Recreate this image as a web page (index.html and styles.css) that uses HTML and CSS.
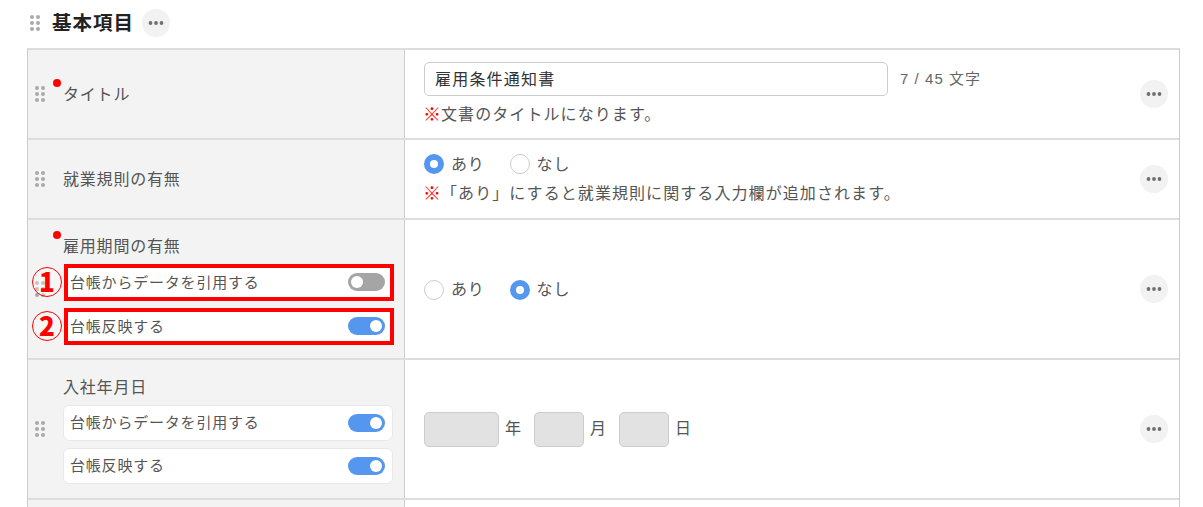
FILE: index.html
```html
<!DOCTYPE html>
<html lang="ja">
<head>
<meta charset="utf-8">
<title>基本項目</title>
<link rel="stylesheet" href="styles.css">
</head>
<body>
<svg class="defs" width="0" height="0" aria-hidden="true">
  <symbol id="grip" viewBox="0 0 10 16">
    <circle cx="2" cy="2" r="2"/><circle cx="8" cy="2" r="2"/>
    <circle cx="2" cy="8" r="2"/><circle cx="8" cy="8" r="2"/>
    <circle cx="2" cy="14" r="2"/><circle cx="8" cy="14" r="2"/>
  </symbol>
  <symbol id="dots" viewBox="0 0 16 4">
    <circle cx="2.5" cy="2" r="1.9"/><circle cx="8" cy="2" r="1.9"/><circle cx="13.5" cy="2" r="1.9"/>
  </symbol>
</svg>
<main class="page">
  <header class="section-head">
    <svg class="grip"><use href="#grip"/></svg>
    <h1 class="section-title">基本項目</h1>
    <button class="more"><svg class="more-icon"><use href="#dots"/></svg></button>
  </header>
  <div class="table">
    <div class="row row-title">
      <div class="label-cell">
        <svg class="grip"><use href="#grip"/></svg>
        <div class="label-body"><span class="label required">タイトル</span></div>
      </div>
      <div class="value-cell">
        <div class="value-body">
          <div class="input-line">
            <div class="text-input">雇用条件通知書</div>
            <span class="counter">7 / 45 文字</span>
          </div>
          <p class="note"><span class="mark">※</span>文書のタイトルになります。</p>
        </div>
        <button class="more"><svg class="more-icon"><use href="#dots"/></svg></button>
      </div>
    </div>
    <div class="row row-rules">
      <div class="label-cell">
        <svg class="grip"><use href="#grip"/></svg>
        <div class="label-body"><span class="label">就業規則の有無</span></div>
      </div>
      <div class="value-cell">
        <div class="value-body">
          <div class="radios">
            <span class="radio-item"><i class="radio on"></i>あり</span>
            <span class="radio-item"><i class="radio"></i>なし</span>
          </div>
          <p class="note note-tight"><span class="mark">※</span>「あり」にすると就業規則に関する入力欄が追加されます。</p>
        </div>
        <button class="more"><svg class="more-icon"><use href="#dots"/></svg></button>
      </div>
    </div>
    <div class="row row-tall">
      <div class="label-cell">
        <svg class="grip"><use href="#grip"/></svg>
        <div class="label-body">
          <span class="label required label-top">雇用期間の有無</span>
          <div class="option marked">
            <span class="callout">1</span>
            <span class="option-text">台帳からデータを引用する</span><i class="toggle off"></i>
          </div>
          <div class="option marked">
            <span class="callout">2</span>
            <span class="option-text">台帳反映する</span><i class="toggle"></i>
          </div>
        </div>
      </div>
      <div class="value-cell">
        <div class="value-body">
          <div class="radios">
            <span class="radio-item"><i class="radio"></i>あり</span>
            <span class="radio-item"><i class="radio on"></i>なし</span>
          </div>
        </div>
        <button class="more"><svg class="more-icon"><use href="#dots"/></svg></button>
      </div>
    </div>
    <div class="row row-tall">
      <div class="label-cell">
        <svg class="grip"><use href="#grip"/></svg>
        <div class="label-body">
          <span class="label label-top">入社年月日</span>
          <div class="option"><span class="option-text">台帳からデータを引用する</span><i class="toggle"></i></div>
          <div class="option"><span class="option-text">台帳反映する</span><i class="toggle"></i></div>
        </div>
      </div>
      <div class="value-cell">
        <div class="date-line">
          <span class="date-box year"></span><span class="date-unit">年</span>
          <span class="date-box"></span><span class="date-unit">月</span>
          <span class="date-box"></span><span class="date-unit">日</span>
        </div>
        <button class="more"><svg class="more-icon"><use href="#dots"/></svg></button>
      </div>
    </div>
    <div class="row row-tall">
      <div class="label-cell"></div>
      <div class="value-cell"></div>
    </div>
  </div>
</main>
</body>
</html>
```
FILE: styles.css
```css
* { box-sizing: border-box; }
html, body { margin: 0; height: 507px; overflow: hidden; background: #fff; }
body {
  font-family: "Noto Sans CJK JP", "Liberation Sans", sans-serif;
  color: #555;
  font-size: 16px;
  letter-spacing: .05em;
}
.defs { position: absolute; }
.page { height: 507px; overflow: hidden; padding: 9px 23px 0 27px; }
.section-head { display: flex; align-items: center; height: 27px; padding-left: 3px; margin-bottom: 12px; }
.section-title { margin: 0 8px 0 12px; padding-bottom: 2px; font-size: 19.5px; font-weight: 700; color: #222; line-height: 25px; letter-spacing: .05em; }
.grip { width: 10px; height: 16px; fill: #aaa; flex: none; }
.more {
  width: 28px; height: 28px; border: 0; padding: 0; border-radius: 50%;
  background: #f2f2f2; display: flex; align-items: center; justify-content: center; flex: none;
}
.more-icon { width: 16px; height: 4px; fill: #6f6f6f; }
.table { border: 1px solid #ccc; border-top: 2px solid #ddd; border-bottom: 0; }
.row { display: grid; grid-template-columns: 377px 1fr; border-bottom: 2px solid #ddd; }
.row-title { height: 90px; }
.row-rules { height: 80px; }
.row-tall { height: 140px; }
.label-cell {
  background: #f3f3f3; border-right: 1px solid #ccc;
  display: flex; align-items: center; gap: 18px; padding: 0 11px 0 7px;
}
.label-body { flex: 1; min-width: 0; display: flex; flex-direction: column; gap: 7px; align-items: flex-start; padding-bottom: 1px; }
.label { position: relative; line-height: 24px; }
.label.required::before {
  content: ""; position: absolute; left: -10px; top: -2px; width: 8px; height: 8px;
  border-radius: 50%; background: #f00;
}
.row-title .label, .row-rules .label { padding-bottom: 2px; line-height: 24px; display: block; }
.option {
  position: relative; width: 100%; height: 36px; background: #fff; border: 1px solid #e8e8e8; border-radius: 6px;
  display: flex; align-items: center; justify-content: space-between; padding: 0 7px 0 6px;
  font-size: 15px;
}
.option-text { padding-bottom: 2px; }
.option.marked { border: 4px solid #f00; border-radius: 0; padding: 0 5px 0 2px; height: 37px; margin: 0 -1px 0 1px; }
.callout {
  position: absolute; left: -36px; top: -1px; width: 30px; height: 30px; border: 1.5px solid #f00; border-radius: 50%;
  color: #f00; font-weight: 900; font-size: 26px; line-height: 26px; text-align: center; letter-spacing: 0;
  background: rgba(255,255,255,.3);
}
.toggle { width: 37px; height: 18px; border-radius: 9px; background: #5596ee; position: relative; flex: none; }
.toggle::after { content: ""; position: absolute; right: 3px; top: 3px; width: 12px; height: 12px; border-radius: 50%; background: #fff; }
.toggle.off { background: #a5a5a5; }
.toggle.off::after { right: auto; left: 3px; }
.value-cell { display: flex; align-items: center; justify-content: space-between; padding: 0 11px 0 19px; }
.value-body { flex: 1; min-width: 0; }
.row-title .value-body { padding-bottom: 1px; }
.row-rules .value-body { padding-bottom: 4px; }
.row-tall .value-body { padding-bottom: 2px; }
.input-line { display: flex; align-items: center; gap: 12px; }
.text-input {
  width: 464px; height: 34px; border: 1px solid #ccc; border-radius: 5px; padding: 0 10px 2px;
  color: #333; line-height: 30px; font-size: 16px; letter-spacing: 1.2px;
}
.counter { font-size: 15px; padding-bottom: 3px; color: #666; letter-spacing: .07em; font-family: "Liberation Sans", "Noto Sans CJK JP", sans-serif; }
.note { margin: 5px 0 0; line-height: 24px; font-size: 16px; display: flex; letter-spacing: 1.08px; }
.note-tight { margin-top: 5px; }
.mark { color: #f00; font-weight: 700; width: 18px; font-size: 18px; flex: none; letter-spacing: 0; margin-left: -1px; }
.radios { display: flex; gap: 25px; }
.radio-item { display: flex; align-items: center; gap: 7px; line-height: 24px; }
.radio { width: 20px; height: 20px; margin-top: 3px; border-radius: 50%; border: 1px solid #ccc; background: #fff; flex: none; }
.radio.on { border: 6.5px solid #5596ee; }
.date-line { display: flex; align-items: center; flex: 1; }
.date-box { width: 50px; height: 35px; background: #e2e2e2; border: 1px solid #ccc; border-radius: 5px; }
.date-box.year { width: 75px; }
.date-unit { width: 35px; padding: 0 0 4px 6px; font-size: 16px; line-height: 24px; }
```
